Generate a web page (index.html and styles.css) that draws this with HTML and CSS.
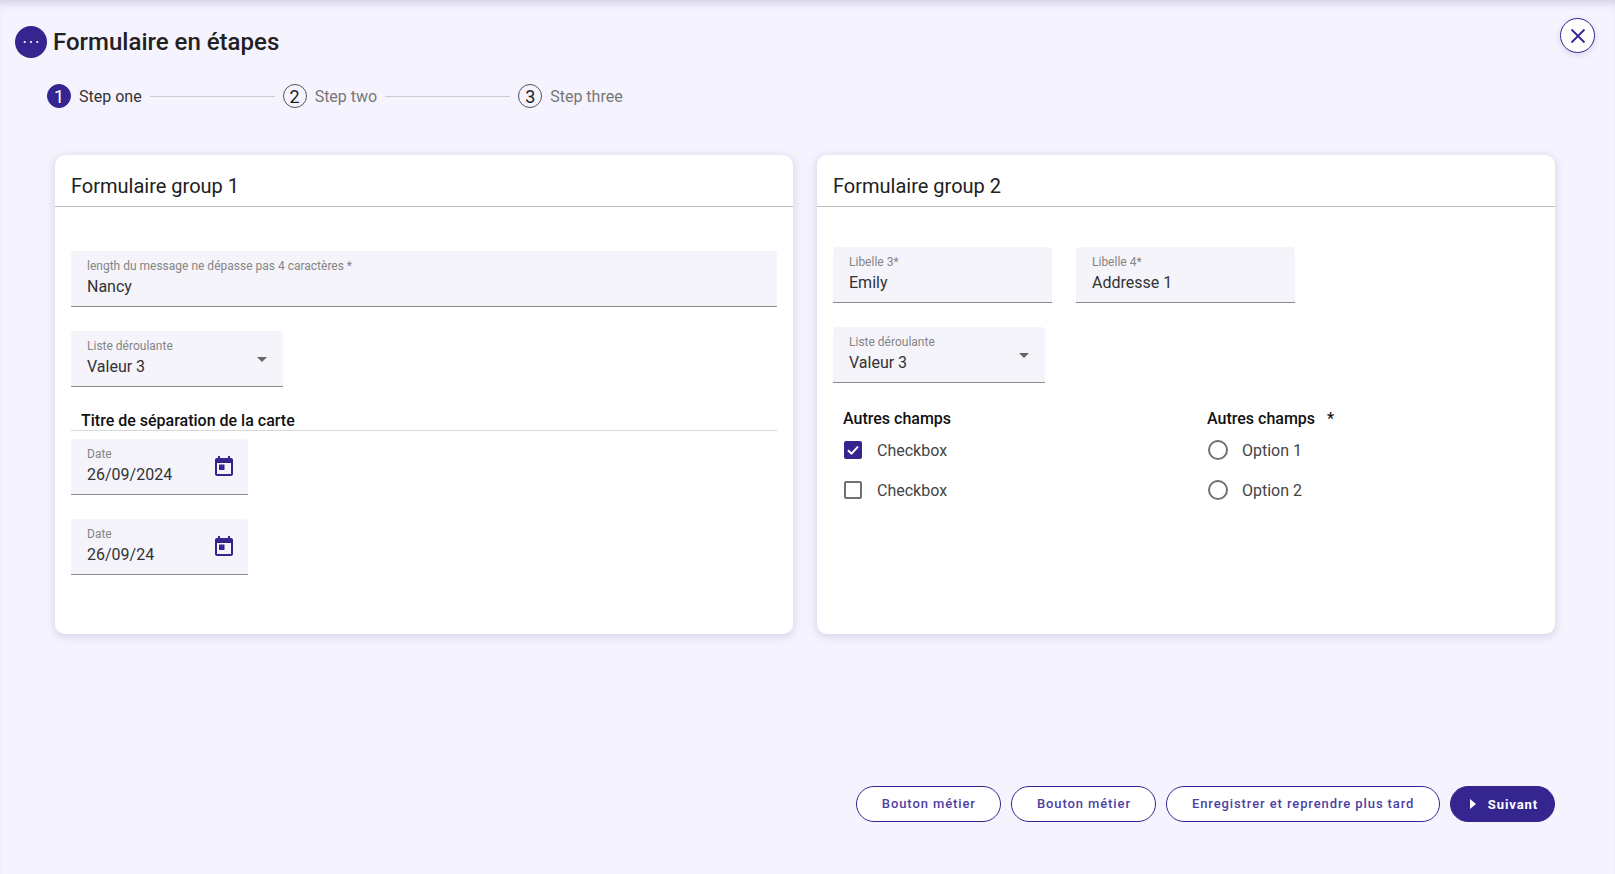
FILE: index.html
```html
<!DOCTYPE html>
<html>
  <head>
    <title>Formulaire en étapes</title>
    <link rel="stylesheet" href="styles.css">
  </head>

  <body>
    <header class="top">
      <div class="title-row">
        <span class="dots"><svg width="16" height="4" viewBox="0 0 16 4"><circle cx="1.7" cy="2" r="1.1"/><circle cx="8" cy="2" r="1.1"/><circle cx="14.3" cy="2" r="1.1"/></svg></span>
        <h1>Formulaire en étapes</h1>
      </div>
      <button class="close"><svg width="16" height="16" viewBox="0 0 16 16"><path d="M1.5 1.5 14.5 14.5M14.5 1.5 1.5 14.5"/></svg></button>
    </header>

    <nav class="stepper">
      <span class="num active">1</span><span class="step-label active">Step one</span><span class="line"></span>
      <span class="num">2</span><span class="step-label">Step two</span><span class="line"></span>
      <span class="num">3</span><span class="step-label">Step three</span>
    </nav>

    <main class="cards">
      <section class="card">
        <h2>Formulaire group 1</h2>
        <div class="card-body first">
          <div class="field full">
            <label>length du message ne dépasse pas 4 caractères *</label>
            <div class="value">Nancy</div>
          </div>
          <div class="field select w212">
            <label>Liste déroulante</label>
            <div class="value">Valeur 3</div>
            <span class="caret"></span>
          </div>
          <h3 class="sep">Titre de séparation de la carte</h3>
          <div class="field date">
            <label>Date</label>
            <div class="value">26/09/2024</div>
            <svg class="cal" width="24" height="24" viewBox="0 0 24 24"><path d="M19 4h-1V2h-2v2H8V2H6v2H5c-1.1 0-2 .9-2 2v14c0 1.1.9 2 2 2h14c1.1 0 2-.9 2-2V6c0-1.1-.9-2-2-2zm0 16H5V9h14v11zM7 10.5h5.5V16H7z"/></svg>
          </div>
          <div class="field date">
            <label>Date</label>
            <div class="value">26/09/24</div>
            <svg class="cal" width="24" height="24" viewBox="0 0 24 24"><path d="M19 4h-1V2h-2v2H8V2H6v2H5c-1.1 0-2 .9-2 2v14c0 1.1.9 2 2 2h14c1.1 0 2-.9 2-2V6c0-1.1-.9-2-2-2zm0 16H5V9h14v11zM7 10.5h5.5V16H7z"/></svg>
          </div>
        </div>
      </section>

      <section class="card">
        <h2>Formulaire group 2</h2>
        <div class="card-body">
          <div class="row">
            <div class="field w219">
              <label>Libelle 3*</label>
              <div class="value">Emily</div>
            </div>
            <div class="field w219">
              <label>Libelle 4*</label>
              <div class="value">Addresse 1</div>
            </div>
          </div>
          <div class="field select w212">
            <label>Liste déroulante</label>
            <div class="value">Valeur 3</div>
            <span class="caret"></span>
          </div>
          <div class="choices">
            <div class="choice-col">
              <h4>Autres champs</h4>
              <div class="choice"><span class="box checked"><svg width="14" height="14" viewBox="0 0 14 14"><path d="M2 7.2 5.5 10.6 12 3.6"/></svg></span>Checkbox</div>
              <div class="choice"><span class="box"></span>Checkbox</div>
            </div>
            <div class="choice-col">
              <h4>Autres champs<span class="star">*</span></h4>
              <div class="choice"><span class="radio"></span>Option 1</div>
              <div class="choice"><span class="radio"></span>Option 2</div>
            </div>
          </div>
        </div>
      </section>
    </main>

    <footer class="actions">
      <button class="btn">Bouton métier</button>
      <button class="btn">Bouton métier</button>
      <button class="btn">Enregistrer et reprendre plus tard</button>
      <button class="btn primary"><span class="play"></span>Suivant</button>
    </footer>
  </body>
</html>
```

FILE: styles.css
```css
html, body {
  height: 100%;
}
body {
  margin: 0;
  height: 874px;
  overflow: hidden;
  background: #f5f3fe;
  font-family: Roboto, sans-serif;
  color: #212121;
  box-shadow: inset 0 8px 10px -6px rgba(60, 50, 110, 0.22);
  display: flex;
  flex-direction: column;
}
.top {
  display: flex;
  justify-content: space-between;
  padding: 18px 20px 0 15px;
  height: 60px;
  box-sizing: border-box;
}
.title-row {
  display: flex;
  align-items: center;
  height: 48px;
  gap: 6px;
}
.dots {
  width: 32px;
  height: 32px;
  border-radius: 50%;
  background: #35258f;
  display: flex;
  align-items: center;
  justify-content: center;
}
.dots circle {
  fill: #fff;
}
h1 {
  margin: 0;
  font-size: 24px;
  font-weight: 500;
  color: #212121;
}
.close {
  width: 35px;
  height: 35px;
  border-radius: 50%;
  border: 1px solid #35258f;
  background: #fff;
  padding: 0;
  display: flex;
  align-items: center;
  justify-content: center;
  box-shadow: 0 2px 6px rgba(50, 40, 100, 0.14);
}
.close path {
  stroke: #35258f;
  stroke-width: 1.8;
  fill: none;
}
.stepper {
  display: flex;
  align-items: center;
  margin: 24px 0 0 47px;
  height: 24px;
  font-size: 16px;
}
.num {
  width: 24px;
  height: 24px;
  box-sizing: border-box;
  border-radius: 50%;
  border: 1px solid #555;
  color: #222;
  font-size: 18px;
  display: flex;
  align-items: center;
  justify-content: center;
}
.num.active {
  background: #35258f;
  border-color: #35258f;
  color: #fff;
}
.step-label {
  margin-left: 8px;
  color: #777;
}
.step-label.active {
  color: #333;
}
.line {
  width: 125px;
  height: 1px;
  background: #ccc;
  margin: 0 8px;
}
.cards {
  display: flex;
  gap: 24px;
  margin: 47px 60px 0 55px;
}
.card {
  flex: 1;
  min-width: 0;
  height: 479px;
  background: #fff;
  border-radius: 10px;
  box-shadow: 0 2px 10px rgba(50, 40, 100, 0.18);
}
h2 {
  margin: 0;
  height: 52px;
  box-sizing: border-box;
  padding: 19px 16px 0;
  font-size: 20px;
  font-weight: 400;
  line-height: 24px;
  border-bottom: 1px solid #bdbdbd;
}
.card-body {
  padding: 40px 16px 0;
}
.card-body.first {
  padding-top: 44px;
}
.row {
  display: flex;
  gap: 24px;
}
.field {
  position: relative;
  height: 56px;
  box-sizing: border-box;
  background: #f5f4fb;
  border-bottom: 1px solid #8a8a8a;
  border-radius: 4px 4px 0 0;
  padding: 8px 16px 0;
  margin-bottom: 24px;
}
.field label {
  display: block;
  font-size: 12px;
  line-height: 14px;
  color: #858585;
}
.value {
  font-size: 16px;
  line-height: 22px;
  margin-top: 3px;
  color: #333;
}
.w212 {
  width: 212px;
}
.w219 {
  width: 219px;
}
.date {
  width: 177px;
}
.caret {
  position: absolute;
  right: 16px;
  top: 26px;
  border-left: 5px solid transparent;
  border-right: 5px solid transparent;
  border-top: 5px solid #666;
}
.cal {
  position: absolute;
  right: 12px;
  top: 15px;
  fill: #35258f;
}
.sep {
  margin: 0 0 8px;
  padding: 0 0 0 10px;
  height: 20px;
  box-sizing: border-box;
  font-size: 16px;
  font-weight: 500;
  line-height: 20px;
  color: #111;
  border-bottom: 1px solid #d8d8d8;
}
.choices {
  display: flex;
  padding: 3px 0 0 11px;
}
.choice-col {
  flex: none;
  width: 364px;
}
h4 {
  margin: -1px 0 1px -1px;
  font-size: 16px;
  font-weight: 500;
  line-height: 20px;
  color: #111;
}
.star {
  margin-left: 12px;
}
.choice {
  display: flex;
  align-items: center;
  height: 40px;
  font-size: 16px;
  color: #444;
}
.box {
  width: 18px;
  height: 18px;
  box-sizing: border-box;
  border: 2px solid #707070;
  border-radius: 2px;
  margin-right: 15px;
  display: flex;
  align-items: center;
  justify-content: center;
}
.box.checked {
  background: #35258f;
  border-color: #35258f;
}
.box path {
  stroke: #fff;
  stroke-width: 2;
  fill: none;
}
.radio {
  width: 20px;
  height: 20px;
  box-sizing: border-box;
  border: 2px solid #707070;
  border-radius: 50%;
  margin-right: 14px;
}
.actions {
  position: absolute;
  top: 786px;
  right: 60px;
  display: flex;
  gap: 10px;
}
.btn {
  height: 36px;
  padding: 0 24.5px 2px;
  border-radius: 18px;
  border: 1px solid #35258f;
  background: #fff;
  color: #4d3fa3;
  font-family: Roboto, sans-serif;
  font-size: 13px;
  font-weight: 500;
  letter-spacing: 0.9px;
}
.btn.primary {
  background: #35258f;
  color: #fff;
  font-weight: 700;
  padding: 0 16px 0 19px;
  display: flex;
  align-items: center;
}
.play {
  border-top: 5.5px solid transparent;
  border-bottom: 5.5px solid transparent;
  border-left: 6.5px solid #fff;
  margin-right: 12px;
}
```
